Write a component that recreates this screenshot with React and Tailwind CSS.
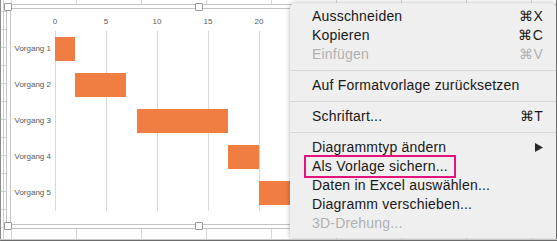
import React from "react";

const U = 10.2;
const ticks = [0, 5, 10, 15, 20];
const tasks = [
  { label: "Vorgang 1", start: 0, dur: 2 },
  { label: "Vorgang 2", start: 2, dur: 5 },
  { label: "Vorgang 3", start: 8, dur: 9 },
  { label: "Vorgang 4", start: 17, dur: 3 },
  { label: "Vorgang 5", start: 20, dur: 4 },
];

const menu = [
  { t: "Ausschneiden", k: "⌘X" },
  { t: "Kopieren", k: "⌘C" },
  { t: "Einfügen", k: "⌘V", dis: true },
  { sep: true },
  { t: "Auf Formatvorlage zurücksetzen" },
  { sep: true },
  { t: "Schriftart...", k: "⌘T" },
  { sep: true },
  { t: "Diagrammtyp ändern", sub: true },
  { t: "Als Vorlage sichern...", hi: true },
  { t: "Daten in Excel auswählen..." },
  { t: "Diagramm verschieben..." },
  { t: "3D-Drehung...", dis: true },
];

function Handle({ cls }) {
  return (
    <div
      className={
        "absolute w-[8px] h-[8px] bg-white border border-[#9a9a9a] rounded-[1px] " +
        cls
      }
    />
  );
}

export default function App() {
  return (
    <div
      className="relative w-[557px] h-[241px] overflow-hidden bg-white [background-image:linear-gradient(#cdcdcd,#cdcdcd),linear-gradient(to_right,#d6d6d6_1px,transparent_1px),linear-gradient(to_bottom,#d6d6d6_1px,transparent_1px)] [background-size:1px_100%,65px_18px,65px_18px] [background-position:3px_0,11px_11px,11px_11px] [background-repeat:no-repeat,repeat,repeat]"
      style={{ fontFamily: '"Liberation Sans", Arial, sans-serif' }}
    >
      {/* Chart object */}
      <div className="absolute left-[6px] top-[4px] w-[600px] h-[225px] border border-[#c4c4c4] bg-white">
        <div className="m-[3px] h-[217px] border border-[#c4c4c4] bg-white flex flex-col">
          <div className="relative h-[22px] ml-[44px] shrink-0">
            {ticks.map((v) => (
              <span
                key={v}
                className="absolute top-[8px] -translate-x-1/2 text-[8px] leading-[10px] text-[#595959]"
                style={{ left: Math.round(v * U) }}
              >
                {v}
              </span>
            ))}
          </div>
          <div className="flex">
            <div className="w-[40px] flex flex-col">
              {tasks.map((t) => (
                <div
                  key={t.label}
                  className="h-[36px] flex items-center justify-end text-[8px] text-[#595959] whitespace-nowrap"
                >
                  {t.label}
                </div>
              ))}
            </div>
            <div className="relative ml-[4px] flex-1 flex flex-col">
              {ticks.map((v) => (
                <div
                  key={v}
                  className="absolute top-0 bottom-0 w-px bg-[#d9d9d9]"
                  style={{ left: Math.round(v * U) }}
                />
              ))}
              {tasks.map((t) => (
                <div key={t.label} className="relative h-[36px] flex items-center">
                  <div
                    className="h-[24px] bg-[#f07d41]"
                    style={{ marginLeft: t.start * U, width: t.dur * U }}
                  />
                </div>
              ))}
            </div>
          </div>
        </div>
      </div>

      <Handle cls="left-[4px] top-[3px]" />
      <Handle cls="left-[195px] top-[3px]" />
      <Handle cls="left-[4px] top-[222px]" />
      <Handle cls="left-[195px] top-[222px]" />

      {/* Context menu */}
      <div className="absolute left-[290px] top-[3px] w-[266px] h-[235px] bg-[#efefef] rounded-tl-[5px] rounded-tr-[5px] shadow-[0_0_5px_rgba(0,0,0,0.3)] pt-[4px] text-[14px] tracking-[0.2px] text-[#181818]">
        {menu.map((m, i) =>
          m.sep ? (
            <div key={i} className="h-[12px] flex items-center">
              <div className="h-px w-full bg-[#d7d7d7]" />
            </div>
          ) : (
            <div
              key={i}
              className={
                "h-[19px] flex items-center justify-between pl-[22px] pr-[13px] whitespace-nowrap " +
                (m.dis ? "text-[#b0b0b0]" : "")
              }
            >
              <span className="relative">
                {m.t}
                {m.hi && (
                  <span className="absolute left-[-8px] right-[-8px] top-[-1px] bottom-[-1px] border-2 border-[#e3127f]" />
                )}
              </span>
              {m.k && <span>{m.k}</span>}
              {m.sub && (
                <svg width="8" height="9" viewBox="0 0 8 9">
                  <polygon points="0,0 8,4.5 0,9" fill="#2a2a2a" />
                </svg>
              )}
            </div>
          )
        )}
      </div>

      {/* window edges */}
      <div className="pointer-events-none absolute inset-0 border-l border-l-[#8c8c8c] border-r border-r-[#6c6c6c] border-b border-b-[#6c6c6c]" />
      <div className="pointer-events-none absolute left-0 right-0 bottom-[1px] h-px bg-[#c9c9c9]" />
    </div>
  );
}
